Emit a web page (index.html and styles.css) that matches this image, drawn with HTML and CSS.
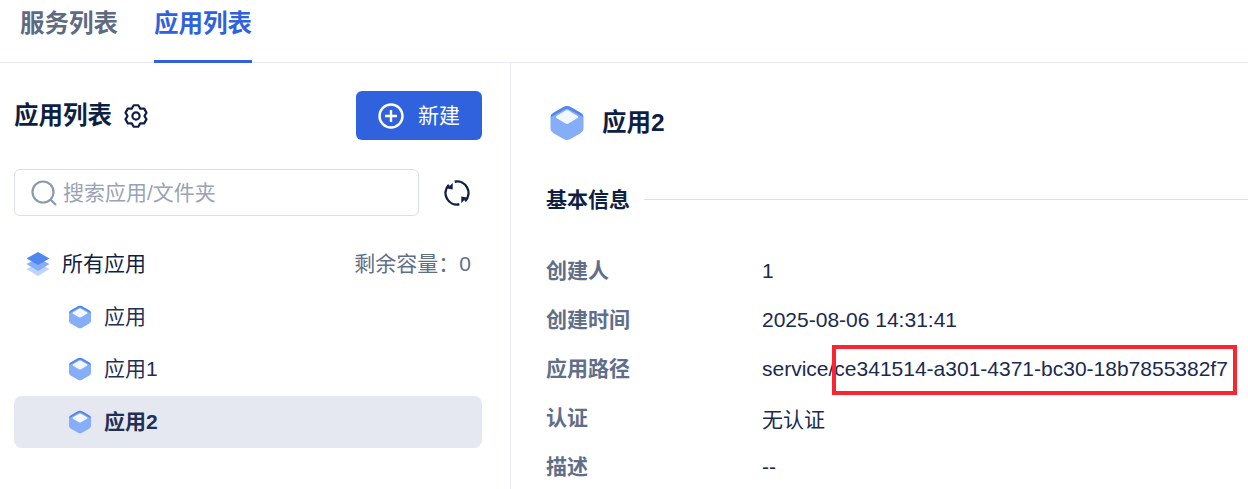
FILE: index.html
```html
<!DOCTYPE html>
<html>
<head>
  <title>应用列表</title>
  <link rel="stylesheet" href="styles.css">
</head>
<body>
  <!-- Tabs -->
  <div class="tabs">
    <div class="tab">服务列表</div>
    <div class="tab active">应用列表</div>
  </div>

  <div class="main">
    <!-- App list -->
    <div class="side">
      <div class="side-head">
        <div class="side-title">
          <span>应用列表</span>
          <svg class="gear" viewBox="0 0 24 24" width="24" height="24" fill="none" stroke="#0f1f44" stroke-width="2.200" stroke-linejoin="round">
            <path d="M9.710 1.240h4.580l1.960 3.400h3.920l2.290 3.960-1.960 3.400 1.960 3.400-2.290 3.960h-3.920l-1.960 3.400H9.710l-1.960-3.400H3.830l-2.290-3.960 1.960-3.400-1.960-3.400 2.290-3.960h3.920z"/>
            <circle cx="12" cy="12" r="3.600"/>
          </svg>
        </div>
        <button class="new-btn">
          <svg viewBox="0 0 26 26" width="26" height="26" fill="none" stroke="#fff" stroke-width="2.400">
            <circle cx="13" cy="13" r="11.500"/>
            <path d="M13 7v12M7 13h12"/>
          </svg>
          <span>新建</span>
        </button>
      </div>

      <div class="search-row">
        <div class="search">
          <svg viewBox="0 0 26 26" width="26" height="26" fill="none" stroke="#8c98ab" stroke-width="2.200">
            <circle cx="12" cy="12" r="10.500"/>
            <path d="M19.500 19.500l5.500 5.500"/>
          </svg>
          <span>搜索应用/文件夹</span>
        </div>
        <svg class="refresh" viewBox="0 0 26 26" width="26" height="26" fill="none" stroke="#0f1f44" stroke-width="2.400">
          <path d="M10.700 1.700A11.500 11.500 0 0 1 21.100 21.100"/>
          <path d="M15.300 24.300A11.500 11.500 0 0 1 4.900 4.900"/>
          <path d="M17.300 23v-6.500l5.700 1zM8.700 3v6.500L3 8.500z" fill="#0f1f44" stroke="none"/>
        </svg>
      </div>

      <div class="tree">
        <div class="tree-all">
          <svg viewBox="0 0 24 24" width="24" height="24">
            <path d="M12 11l11.500 6L12 24 .5 17z" fill="#bfd4fd"/>
            <path d="M12 6l11.500 6L12 19 .5 12z" fill="#85adf8"/>
            <path d="M12 0l11.500 6.500L12 13 .5 6.500z" fill="#4f86ef"/>
          </svg>
          <span class="tree-name">所有应用</span>
          <span class="capacity">剩余容量：0</span>
        </div>
        <div class="tree-item">
          <svg class="app-icon" viewBox="0 0 36 36" width="24" height="24"><use href="#cube"/></svg>
          <span>应用</span>
        </div>
        <div class="tree-item">
          <svg class="app-icon" viewBox="0 0 36 36" width="24" height="24"><use href="#cube"/></svg>
          <span>应用1</span>
        </div>
        <div class="tree-item selected">
          <svg class="app-icon" viewBox="0 0 36 36" width="24" height="24"><use href="#cube"/></svg>
          <span>应用2</span>
        </div>
      </div>
    </div>

    <!-- App detail -->
    <div class="detail">
      <div class="detail-title">
        <svg viewBox="0 0 36 36" width="36" height="36"><use href="#cube"/></svg>
        <span>应用2</span>
      </div>
      <div class="section">
        <span>基本信息</span>
        <div class="section-line"></div>
      </div>
      <div class="info">
        <div class="info-label">创建人</div>
        <div class="info-value">1</div>
        <div class="info-label">创建时间</div>
        <div class="info-value">2025-08-06 14:31:41</div>
        <div class="info-label">应用路径</div>
        <div class="info-value">service/ce341514-a301-4371-bc30-18b7855382f7</div>
        <div class="info-label">认证</div>
        <div class="info-value">无认证</div>
        <div class="info-label">描述</div>
        <div class="info-value">--</div>
      </div>
    </div>
  </div>

  <!-- Red mark drawn over the path -->
  <div class="mark"></div>

  <svg class="defs" width="0" height="0">
    <symbol id="cube" viewBox="0 0 36 36">
      <path d="M18 1q1.500 0 3 .8l10.500 6q3 1.700 3 4.500v11.400q0 2.800-3 4.500l-10.500 6q-3 1.600-6 0l-10.500-6q-3-1.700-3-4.500V12.300q0-2.800 3-4.500l10.500-6q1.500-.8 3-.8z" fill="#85adf8"/>
      <path d="M15 1.800q3-1.600 6 0l10.500 6q3 1.700 3 4.500L19.500 4q-1.500-.8-3 0L1.500 12.300q0-2.800 3-4.500z" fill="#4f86ef"/>
      <path d="M16.500 5.500q1.500-.8 3 0l9 5.500q1.500 1 0 2l-9 5.500q-1.500.8-3 0l-9-5.500q-1.500-1 0-2z" fill="#f3f7ff"/>
    </symbol>
  </svg>
</body>
</html>
```

FILE: styles.css
```css
* {
  box-sizing: border-box;
}
body {
  margin: 0;
  height: 489px;
  overflow: hidden;
  position: relative;
  background: #fff;
  font-family: "Liberation Sans", "Noto Sans CJK SC", sans-serif;
  color: #0f1f44;
}
.tabs {
  display: flex;
  gap: 36px;
  height: 63px;
  padding-left: 20px;
  border-bottom: 1px solid #e6e8f2;
}
.tab {
  height: 63px;
  line-height: 48px;
  font-size: 24.500px;
  font-weight: 700;
  color: #5f6b80;
}
.tab.active {
  color: #2f62dc;
  border-bottom: 3px solid #2f62dc;
}
.main {
  display: flex;
  height: 426px;
}
.side {
  width: 511px;
  padding: 28px 28px 0 14px;
  border-right: 1px solid #e6e8f2;
}
.side-head {
  display: flex;
  align-items: center;
  justify-content: space-between;
  height: 49px;
}
.side-title {
  display: flex;
  align-items: center;
  gap: 12px;
  font-size: 24.500px;
  font-weight: 700;
}
.side-title span {
  padding-bottom: 4px;
}
.new-btn {
  display: flex;
  align-items: center;
  justify-content: center;
  gap: 14px;
  width: 126px;
  height: 49px;
  border: 0;
  border-radius: 6px;
  background: #2f62dc;
  color: #fff;
  font-family: inherit;
  font-size: 21px;
}
.new-btn span {
  padding-bottom: 4px;
}
.search-row {
  display: flex;
  align-items: center;
  gap: 25px;
  margin-top: 29px;
}
.search {
  display: flex;
  align-items: center;
  gap: 6px;
  width: 405px;
  height: 47px;
  padding-left: 16px;
  border: 1px solid #dcdfea;
  border-radius: 6px;
  font-size: 21px;
  color: #98a3b5;
}
.search span {
  padding-bottom: 4px;
}
.tree {
  margin-top: 24px;
}
.tree-all {
  display: flex;
  align-items: center;
  height: 52px;
  padding: 0 11px 4px 12px;
  font-size: 21px;
}
.tree-all span {
  padding-bottom: 4px;
}
.tree-name {
  margin-left: 12px;
}
.capacity {
  margin-left: auto;
  color: #5f6f8a;
}
.tree-item {
  display: flex;
  align-items: center;
  gap: 12px;
  height: 52px;
  padding: 0 0 2px 54px;
  font-size: 21px;
  color: #1f2f55;
  border-radius: 8px;
}
.tree-item span {
  padding-bottom: 4px;
}
.tree-item.selected {
  padding-bottom: 0;
  background: #e5e8f0;
  font-weight: 700;
}
.detail {
  flex: 1;
  padding: 42px 0 0 35px;
}
.detail-title {
  display: flex;
  align-items: center;
  gap: 17px;
  height: 36px;
  padding-left: 3px;
  font-size: 24.500px;
  font-weight: 700;
}
.detail-title span {
  padding-bottom: 6px;
}
.section {
  display: flex;
  align-items: center;
  gap: 14px;
  margin-top: 42px;
  font-size: 21px;
  font-weight: 700;
}
.section-line {
  flex: 1;
  height: 1px;
  margin-top: 2px;
  background: #dcdfea;
}
.info {
  display: grid;
  grid-template-columns: 216px 1fr;
  grid-auto-rows: 49px;
  align-items: center;
  margin-top: 33px;
  font-size: 21px;
}
.info-label {
  padding-bottom: 4px;
  font-weight: 700;
  color: #5f6f8a;
}
.info-value {
  color: #1a2a4f;
}
.mark {
  position: absolute;
  left: 832px;
  top: 345px;
  width: 405px;
  height: 50px;
  border: 4px solid #fa2530;
}
.defs {
  position: absolute;
}
```
